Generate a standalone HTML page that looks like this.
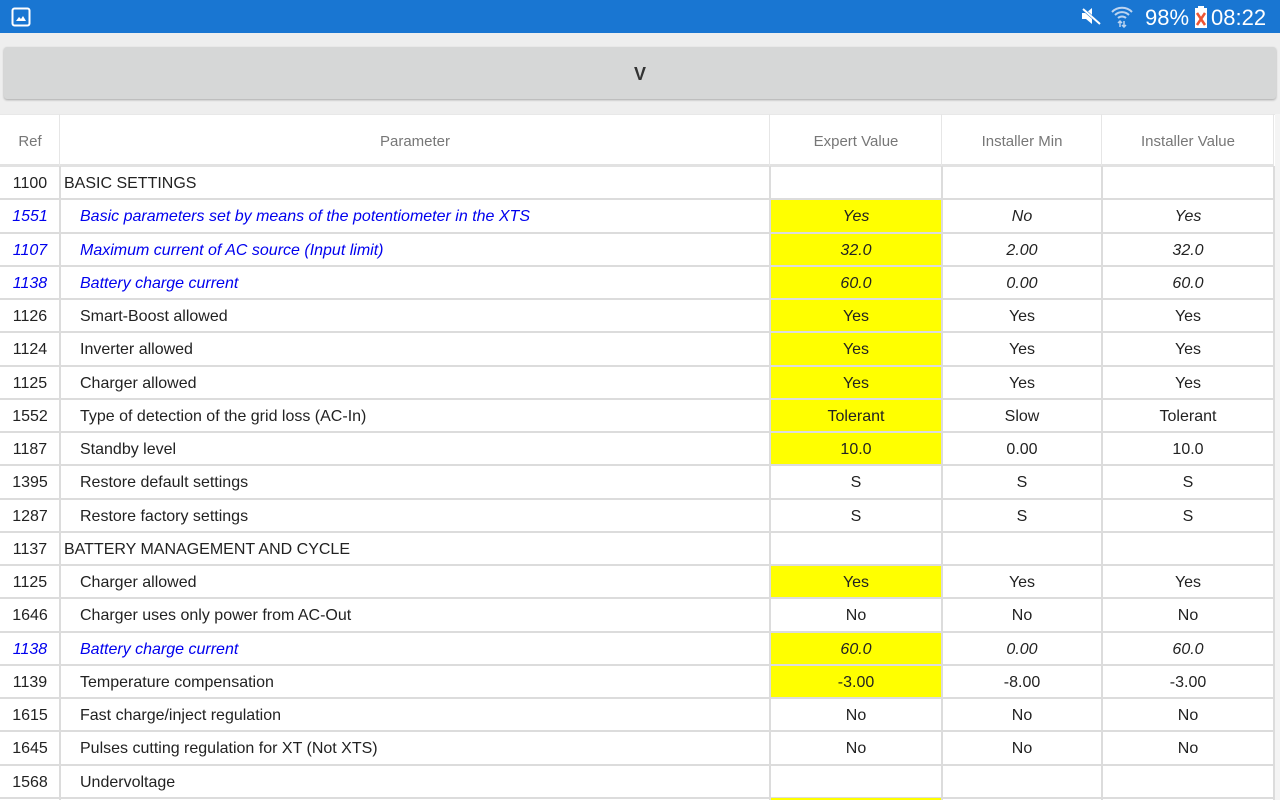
<!DOCTYPE html>
<html><head><meta charset="utf-8"><style>
*{margin:0;padding:0;box-sizing:border-box}
body{width:1280px;height:800px;overflow:hidden;background:#eeeeee;font-family:"Liberation Sans",sans-serif;position:relative}
#sb{position:absolute;left:0;top:0;width:1280px;height:33px;background:#1976d2;color:#fff}
#btn{position:absolute;left:4px;top:47px;width:1272px;height:52px;background:#d6d7d7;border-radius:3px;box-shadow:0 1px 2px rgba(0,0,0,.3);text-align:center;line-height:54px;font-size:18px;font-weight:bold;color:#333}
#tbl{position:absolute;left:0;top:114px;width:1280px;height:686px;background:#fff}
.c{position:absolute;font-size:16px;color:#222;white-space:nowrap;overflow:hidden}
.hl{position:absolute;background:#dcdcdc}
.y{background:#ffff00}
.bl{color:#0000ee;font-style:italic}
.it{font-style:italic}
</style></head><body>
<div id="sb">
<svg style="position:absolute;left:11px;top:7px" width="20" height="20" viewBox="0 0 20 20"><rect x="1.5" y="1.5" width="17" height="17" rx="2" fill="none" stroke="#fff" stroke-width="2"/><path d="M5 14 L8 10 L10 12 L12 9 L15 14Z" fill="#fff"/></svg>
<svg style="position:absolute;left:1080px;top:6px" width="22" height="20" viewBox="0 0 22 20"><path d="M2 7 H6 L12 2 V18 L6 13 H2Z" fill="#fff"/><path d="M3 3 L20 18" stroke="#1976d2" stroke-width="3"/><path d="M3 3 L20 18" stroke="#fff" stroke-width="2"/></svg>
<svg style="position:absolute;left:1110px;top:4px" width="24" height="24" viewBox="0 0 24 24"><path d="M2 8 A14 14 0 0 1 22 8" stroke="#bcd4f0" stroke-width="2" fill="none"/><path d="M5 11 A10 10 0 0 1 19 11" stroke="#bcd4f0" stroke-width="2" fill="none"/><path d="M8 14 A6 6 0 0 1 16 14" stroke="#bcd4f0" stroke-width="2" fill="none"/><path d="M10 23 V17 M8 19 L10 17 L12 19 M14 17 V23 M12 21 L14 23 L16 21" stroke="#bcd4f0" stroke-width="1.5" fill="none"/></svg>
<div style="position:absolute;left:1145px;top:5px;font-size:22px">98%</div>
<svg style="position:absolute;left:1194px;top:6px" width="14" height="22" viewBox="0 0 14 22"><rect x="4" y="0" width="6" height="3" fill="#fff"/><rect x="1" y="2" width="12" height="20" fill="#fff"/><path d="M3 7 L11 19 M11 7 L3 19" stroke="#e53" stroke-width="2.5"/></svg>
<div style="position:absolute;left:1211px;top:5px;font-size:22px">08:22</div>
</div>
<div id="btn">V</div>
<div id="tbl">
<div class="hl" style="left:0;top:0;width:1280px;height:1px;background:#e8e8e8"></div>
</div>
<div id="abs"></div>
<script>
var cols=[0,60,770,942,1102,1274];
var rows=[
["1100","BASIC SETTINGS","","","",0,"s"],
["1551","Basic parameters set by means of the potentiometer in the XTS","Yes","No","Yes",1,"b"],
["1107","Maximum current of AC source (Input limit)","32.0","2.00","32.0",1,"b"],
["1138","Battery charge current","60.0","0.00","60.0",1,"b"],
["1126","Smart-Boost allowed","Yes","Yes","Yes",1,""],
["1124","Inverter allowed","Yes","Yes","Yes",1,""],
["1125","Charger allowed","Yes","Yes","Yes",1,""],
["1552","Type of detection of the grid loss (AC-In)","Tolerant","Slow","Tolerant",1,""],
["1187","Standby level","10.0","0.00","10.0",1,""],
["1395","Restore default settings","S","S","S",0,""],
["1287","Restore factory settings","S","S","S",0,""],
["1137","BATTERY MANAGEMENT AND CYCLE","","","",0,"s"],
["1125","Charger allowed","Yes","Yes","Yes",1,""],
["1646","Charger uses only power from AC-Out","No","No","No",0,""],
["1138","Battery charge current","60.0","0.00","60.0",1,"b"],
["1139","Temperature compensation","-3.00","-8.00","-3.00",1,""],
["1615","Fast charge/inject regulation","No","No","No",0,""],
["1645","Pulses cutting regulation for XT (Not XTS)","No","No","No",0,""],
["1568","Undervoltage","","","",0,""]
];
var h='';
h+='<div class="c" style="left:0;width:60px;top:117px;height:50px;line-height:50px;text-align:center;color:#777;font-size:15px">Ref</div>';
var hn=["Parameter","Expert Value","Installer Min","Installer Value"];
for(var i=0;i<4;i++)h+='<div class="c" style="left:'+cols[i+1]+'px;width:'+(cols[i+2]-cols[i+1])+'px;top:117px;height:50px;line-height:50px;text-align:center;color:#777;font-size:15px">'+hn[i]+'</div>';
h+='<div class="hl" style="left:0;top:164px;width:1274px;height:3px;background:#e2e2e2"></div>';
for(var j=0;j<6;j++)h+='<div class="hl" style="left:'+(cols[j]-1)+'px;top:114px;width:1px;height:52px;background:#e6e6e6"></div>';
var top0=166,rh=33.25;
for(var r=0;r<rows.length;r++){
 var R=rows[r],t=top0+r*rh,tt=t+1;
 if(R[5])h+='<div class="y" style="position:absolute;left:771px;top:'+(t+1)+'px;width:171px;height:'+(rh-1)+'px"></div>';
 var cl=R[6]=="b"?" bl":"";
 var vc=R[6]=="b"?" it":"";
 h+='<div class="c'+cl+'" style="left:0;width:60px;top:'+tt+'px;height:'+rh+'px;line-height:'+rh+'px;text-align:center">'+R[0]+'</div>';
 h+='<div class="c'+cl+'" style="left:'+(R[6]=="s"?64:80)+'px;width:690px;top:'+tt+'px;height:'+rh+'px;line-height:'+rh+'px">'+R[1]+'</div>';
 for(var k=0;k<3;k++)h+='<div class="c'+vc+'" style="left:'+cols[k+2]+'px;width:'+(cols[k+3]-cols[k+2])+'px;top:'+tt+'px;height:'+rh+'px;line-height:'+rh+'px;text-align:center">'+R[2+k]+'</div>';
 h+='<div class="hl" style="left:0;top:'+(t+rh-1)+'px;width:1274px;height:2px"></div>';
}
h+='<div class="y" style="position:absolute;left:771px;top:798px;width:171px;height:2px"></div>';
for(var j=1;j<6;j++)h+='<div class="hl" style="left:'+(cols[j]-1)+'px;top:166px;width:2px;height:634px"></div>';
h+='<div style="position:absolute;left:1275px;top:114px;width:5px;height:686px;background:#f4f4f4"></div>';
document.getElementById('abs').innerHTML=h;
</script>
</body></html>
